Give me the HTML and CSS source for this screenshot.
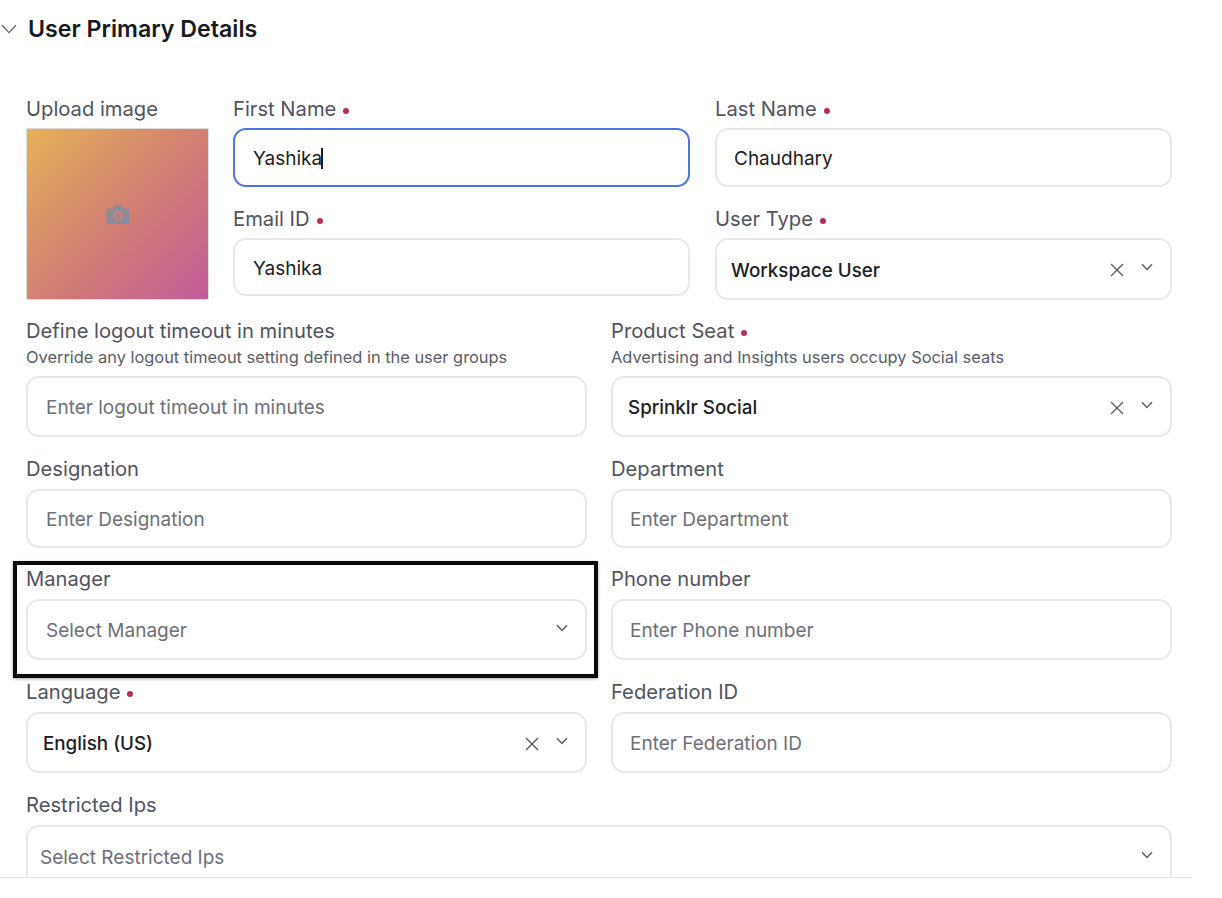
FILE: index.html
```html
<!DOCTYPE html>
<html lang="en">
<head>
<meta charset="utf-8">
<title>User Primary Details</title>
<link rel="stylesheet" href="styles.css">
</head>
<body>
<svg class="sprite" width="0" height="0" aria-hidden="true">
  <symbol id="chev" viewBox="0 0 12 8"><path d="M1 1.2 6 6.4 11 1.2" fill="none" stroke="currentColor" stroke-width="1.5"/></symbol>
  <symbol id="cross" viewBox="0 0 14 14"><path d="M1 1 13 13M13 1 1 13" fill="none" stroke="currentColor" stroke-width="1.4"/></symbol>
</svg>
<main class="page">
  <header class="section-head">
    <svg class="head-chev" viewBox="0 0 16 10"><path d="M1 1.2 8 8.6 15 1.2" fill="none" stroke="currentColor" stroke-width="1.3"/></svg>
    <h1 class="section-title">User Primary Details</h1>
  </header>

  <section class="top-grid">
    <div class="upload">
      <div class="label">Upload image</div>
      <div class="upload-box">
        <svg class="camera" viewBox="0 0 24 20"><path fill-rule="evenodd" d="M0 4h6.5L8.5 0h7l2 4H24v16H0zM12 6.2a5.3 5.3 0 1 0 0 10.6 5.3 5.3 0 0 0 0-10.6zM12 8.6a2.9 2.9 0 1 1 0 5.8 2.9 2.9 0 0 1 0-5.8z" fill="currentColor"/></svg>
      </div>
    </div>
    <div class="field">
      <div class="label">First Name<span class="req"></span></div>
      <div class="control h59 focused pad-20"><span class="value">Yashika</span><span class="caret"></span></div>
    </div>
    <div class="field">
      <div class="label">Last Name<span class="req"></span></div>
      <div class="control h59 pad-19"><span class="value">Chaudhary</span></div>
    </div>
    <div class="field">
      <div class="label">Email ID<span class="req"></span></div>
      <div class="control h58 pad-20"><span class="value">Yashika</span></div>
    </div>
    <div class="field">
      <div class="label">User Type<span class="req"></span></div>
      <div class="control h62 pad-16">
        <span class="value strong">Workspace User</span>
        <svg class="x-icon"><use href="#cross"/></svg>
        <svg class="chev-icon"><use href="#chev"/></svg>
      </div>
    </div>
  </section>

  <section class="form-grid row-a">
    <div class="field">
      <div class="label">Define logout timeout in minutes</div>
      <div class="hint">Override any logout timeout setting defined in the user groups</div>
      <div class="control h61 pad-20"><span class="placeholder">Enter logout timeout in minutes</span></div>
    </div>
    <div class="field">
      <div class="label">Product Seat<span class="req"></span></div>
      <div class="hint">Advertising and Insights users occupy Social seats</div>
      <div class="control h61 pad-17">
        <span class="value strong">Sprinklr Social</span>
        <svg class="x-icon"><use href="#cross"/></svg>
        <svg class="chev-icon"><use href="#chev"/></svg>
      </div>
    </div>
  </section>

  <section class="form-grid row-b">
    <div class="field">
      <div class="label">Designation</div>
      <div class="control h59 pad-20"><span class="placeholder">Enter Designation</span></div>
    </div>
    <div class="field">
      <div class="label">Department</div>
      <div class="control h59 pad-19"><span class="placeholder">Enter Department</span></div>
    </div>
  </section>

  <section class="form-grid row-c">
    <div class="field highlighted">
      <div class="label">Manager</div>
      <div class="control h61 pad-20">
        <span class="placeholder">Select Manager</span>
        <svg class="chev-icon push"><use href="#chev"/></svg>
      </div>
    </div>
    <div class="field">
      <div class="label">Phone number</div>
      <div class="control h61 pad-19"><span class="placeholder">Enter Phone number</span></div>
    </div>
  </section>

  <section class="form-grid row-d">
    <div class="field">
      <div class="label">Language<span class="req"></span></div>
      <div class="control h61 pad-17">
        <span class="value strong">English (US)</span>
        <svg class="x-icon"><use href="#cross"/></svg>
        <svg class="chev-icon"><use href="#chev"/></svg>
      </div>
    </div>
    <div class="field">
      <div class="label">Federation ID</div>
      <div class="control h61 pad-19"><span class="placeholder">Enter Federation ID</span></div>
    </div>
  </section>

  <section class="row-e">
    <div class="field">
      <div class="label">Restricted Ips</div>
      <div class="control h63 pad-14">
        <span class="placeholder">Select Restricted Ips</span>
        <svg class="chev-icon push"><use href="#chev"/></svg>
      </div>
    </div>
  </section>
</main>
</body>
</html>
```
FILE: styles.css
```css
*, *::after { box-sizing: border-box; }

html, body {
  margin: 0;
  background: #fff;
}

body {
  font-family: Inter, "Liberation Sans", sans-serif;
  color: #1d1f27;
  height: 898px;
  overflow: hidden;
}

.sprite { position: absolute; }

.page {
  width: 1192px;
  height: 878px;
  padding: 0 20px 0 26px;
  overflow: hidden;
  border-bottom: 1px solid #dedfe2;
}

.section-head {
  display: flex;
  align-items: center;
  height: 57px;
  margin-left: -25px;
  gap: 11px;
}

.head-chev {
  width: 16px;
  height: 10px;
  color: #5f6270;
  flex: none;
}

.section-title {
  margin: 0;
  font-size: 23.2px;
  font-weight: 600;
  color: #171a22;
}

.top-grid {
  display: grid;
  grid-template-columns: 182px 457px 457px;
  column-gap: 25px;
  row-gap: 22px;
  margin-top: 42px;
  align-items: start;
}

.upload { grid-row: 1 / span 2; }

.upload-box {
  width: 183px;
  height: 172px;
  display: flex;
  align-items: center;
  justify-content: center;
  border: 1px solid #dcdcdc;
  border-radius: 2px;
  background: linear-gradient(135deg, #e6b158 0%, #d68a6c 40%, #cc7180 70%, #c25c9c 100%);
}

.camera {
  width: 24px;
  height: 19px;
  color: #8b8a9b;
}

.form-grid {
  display: grid;
  grid-template-columns: 561px 561px;
  column-gap: 24px;
}

.row-a { margin-top: 21px; }
.row-b { margin-top: 22px; }
.row-c { margin-top: 21px; }
.row-d { margin-top: 22px; }
.row-e { margin-top: 22px; }

.field { position: relative; }

.label {
  height: 20px;
  margin-bottom: 10px;
  font-size: 20.2px;
  line-height: 20px;
  color: #51535f;
  white-space: nowrap;
}

.top-grid .label { margin-bottom: 9px; }

.req {
  display: inline-block;
  width: 6px;
  height: 6px;
  margin-left: 7px;
  border-radius: 50%;
  background: #b62e5f;
  vertical-align: 2px;
}

.hint {
  height: 20px;
  margin-top: -4px;
  margin-bottom: 9px;
  font-size: 16.4px;
  line-height: 20px;
  color: #5a5c68;
  white-space: nowrap;
}

.control {
  display: flex;
  align-items: center;
  padding-top: 2px;
  background: #fff;
  border: 2px solid #e6e7ea;
  border-radius: 13px;
}

.h58 { height: 58px; }
.h59 { height: 59px; }
.h61 { height: 61px; }
.h62 { height: 62px; }
.h63 { height: 63px; }
.pad-14 { padding-left: 12px; }
.pad-16 { padding-left: 14px; }
.pad-17 { padding-left: 15px; }
.pad-19 { padding-left: 17px; }
.pad-20 { padding-left: 18px; }

.focused {
  border-color: #4d74e8;
}

.value {
  font-size: 19px;
  color: #1b1d25;
}

.value.strong {
  font-size: 18.8px;
  font-weight: 500;
}

.placeholder {
  font-size: 19px;
  color: #6e7079;
}

.caret {
  width: 1.5px;
  height: 21px;
  margin-left: -1px;
  background: #1b1d25;
}

.x-icon {
  width: 14px;
  height: 14px;
  margin-left: auto;
  color: #5b5d69;
}

.chev-icon {
  width: 12px;
  height: 8px;
  margin-left: 17px;
  margin-right: 17px;
  margin-bottom: 6px;
  color: #5b5d69;
}

.chev-icon.push { margin-left: auto; }

.highlighted::after {
  content: "";
  position: absolute;
  left: -13px;
  top: -8px;
  width: 585px;
  height: 117px;
  border: 4px solid #0b0b0b;
  box-shadow: 0 1px 3px rgba(0, 0, 0, 0.35);
  pointer-events: none;
}
```
